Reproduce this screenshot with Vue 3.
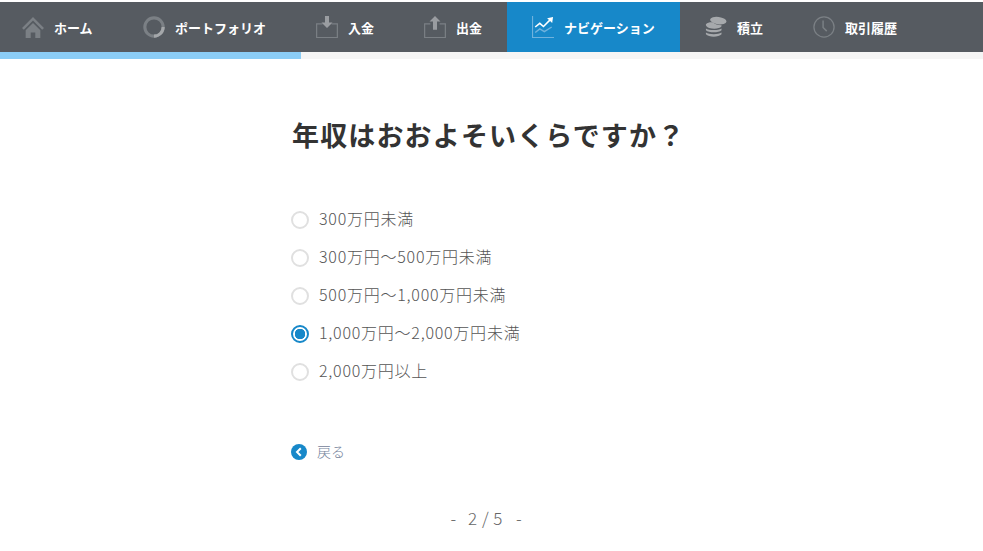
<script setup>
const options = ['300万円未満', '300万円〜500万円未満', '500万円〜1,000万円未満', '1,000万円〜2,000万円未満', '2,000万円以上']
</script>

<template>
  <div class="page">
    <nav class="nav">
      <a class="item i-home"><svg viewBox="0 0 24 24" width="22" height="22"><path d="M12 1 0 13l2 2L12 5l10 10 2-2z" fill="#7b8085"/><path d="M4 15.500 12 7.500l8 8V24h-5.500v-6h-5v6H4z" fill="#7b8085"/></svg><span>ホーム</span></a>
      <a class="item"><svg viewBox="0 0 24 24" width="22" height="22"><circle cx="12" cy="12" r="10" fill="none" stroke="#7b8085" stroke-width="3.400"/><path d="M22 12A10 10 0 0 1 12 22" fill="none" stroke="#a4a7aa" stroke-width="3.400"/></svg><span>ポートフォリオ</span></a>
      <a class="item"><svg viewBox="0 0 24 24" width="22" height="22"><path d="M7 8.500H.700v15h22.600v-15H17" fill="none" stroke="#7b8085" stroke-width="1.300"/><path d="M9.800 0h4.400v7H18l-6 6-6-6h3.800z" fill="#9a9da1"/></svg><span>入金</span></a>
      <a class="item"><svg viewBox="0 0 24 24" width="22" height="22"><path d="M7 8.500H.700v15h22.600v-15H17" fill="none" stroke="#7b8085" stroke-width="1.300"/><path d="M12 0l6 6h-3.800v9H9.800V6H6z" fill="#9a9da1"/></svg><span>出金</span></a>
      <a class="item active"><svg viewBox="0 0 24 24" width="22" height="22"><path d="M.600 0v23.400H24" fill="none" stroke="#6fb2dd" stroke-width="1.200"/><path d="M3.500 12l5-4 4 3.500L20 4" fill="none" stroke="#fff" stroke-width="1.700"/><path d="M16.500 2.500 23 1l-1 6.500z" fill="#fff"/><path d="M3.500 18l5-4 5 3 8-5" fill="none" stroke="#6fb2dd" stroke-width="1.600"/></svg><span>ナビゲーション</span></a>
      <a class="item"><svg viewBox="0 0 24 24" width="22" height="22"><ellipse cx="14.500" cy="5" rx="9" ry="4" fill="#a6a9ac" transform="rotate(8 14.500 5)"/><path d="M1 9c2-2 5-2.500 8-2 2 2 5 3 9 3 .5 1-.5 2.500-3 3.200-3 .8-7 .8-10.500-.2C2 12 .5 10.500 1 9z" fill="#a6a9ac"/><path d="M1 13.500c3 2.200 13 2.700 17 0v2c-3 3-14 3-17 0z" fill="#a6a9ac"/><path d="M1 18c3 2.200 13 2.700 17 0v2c-3 3.500-14 3.500-17 0z" fill="#a6a9ac"/></svg><span>積立</span></a>
      <a class="item"><svg viewBox="0 0 24 24" width="22" height="22"><circle cx="12" cy="12" r="11" fill="none" stroke="#7b8085" stroke-width="1.400"/><path d="M11 5v7.500l4 4" fill="none" stroke="#7b8085" stroke-width="1.600"/></svg><span>取引履歴</span></a>
    </nav>
    <div class="progress"><div class="bar" /></div>
    <main class="content">
      <h1>年収はおおよそいくらですか？</h1>
      <ul class="options">
        <li v-for="(o, i) in options" :key="o" class="option">
          <span class="radio" :class="{ on: i === 3 }" />
          <span class="label">{{ o }}</span>
        </li>
      </ul>
      <a class="back">
        <svg viewBox="0 0 16 16" width="16" height="16"><circle cx="8" cy="8" r="8" fill="#1788c9"/><path d="M9.800 4.200 6 8l3.800 3.800" fill="none" stroke="#fff" stroke-width="2"/></svg>
        <span class="back-label">戻る</span>
      </a>
    </main>
    <div class="pager"><span>-</span><span class="count">2 / 5</span><span>-</span></div>
  </div>
</template>

<style>
html, body { margin: 0; background: #fff; }
</style>

<style scoped>
.page {
  width: 983px;
  height: 551px;
  overflow: hidden;
  padding-top: 2px;
  box-sizing: border-box;
  font-family: "Noto Sans CJK JP", "Liberation Sans", sans-serif;
  color: #555;
}
.nav {
  display: flex;
  height: 50px;
  background: #565b61;
}
.item {
  display: flex;
  align-items: center;
  gap: 10px;
  width: 108px;
  padding-left: 25px;
  box-sizing: border-box;
  color: #fff;
  font-size: 13px;
  font-weight: 700;
  white-space: nowrap;
}
.item svg { flex: none; }
.item:nth-child(2), .active { width: 173px; }
.item:last-child { flex: 1; }
.i-home { width: 118px; padding-left: 22px; }
.active { background: #1788c9; }
.progress {
  height: 7px;
  background: #f5f5f5;
}
.bar {
  width: 301px;
  height: 100%;
  background: #8bcdf6;
}
.content {
  width: 400px;
  margin-left: 291px;
}
h1 {
  margin: 0;
  padding-top: 56px;
  padding-left: 1px;
  font-size: 27px;
  line-height: 40px;
  font-weight: 700;
  color: #333;
  letter-spacing: 1.150px;
  white-space: nowrap;
}
.options {
  list-style: none;
  margin: 51px 0 0;
  padding: 0;
  display: flex;
  flex-direction: column;
  gap: 10px;
}
.option {
  display: flex;
  align-items: center;
  gap: 10px;
  height: 28px;
  font-size: 16px;
  font-weight: 300;
  letter-spacing: 0.760px;
  color: #555;
  white-space: nowrap;
}
.label { padding-bottom: 4px; }
.radio {
  width: 18px;
  height: 18px;
  box-sizing: border-box;
  border: 2px solid #e0e0e0;
  border-radius: 50%;
  background: #fff;
}
.radio.on {
  border-color: #1788c9;
  border-width: 2.500px;
  background: radial-gradient(circle, #1788c9 0 5px, #fff 5.500px);
}
.back {
  display: flex;
  align-items: center;
  gap: 10px;
  margin-top: 54px;
  height: 24px;
  font-size: 14px;
  font-weight: 300;
  color: #73829a;
}
.back-label { padding-bottom: 2px; }
.pager {
  display: flex;
  justify-content: center;
  gap: 12px;
  margin-top: 42px;
  padding-right: 11px;
  font-size: 17px;
  font-weight: 300;
  line-height: 24px;
  color: #666;
}
.count { word-spacing: -2px; letter-spacing: 1.500px; }
</style>
